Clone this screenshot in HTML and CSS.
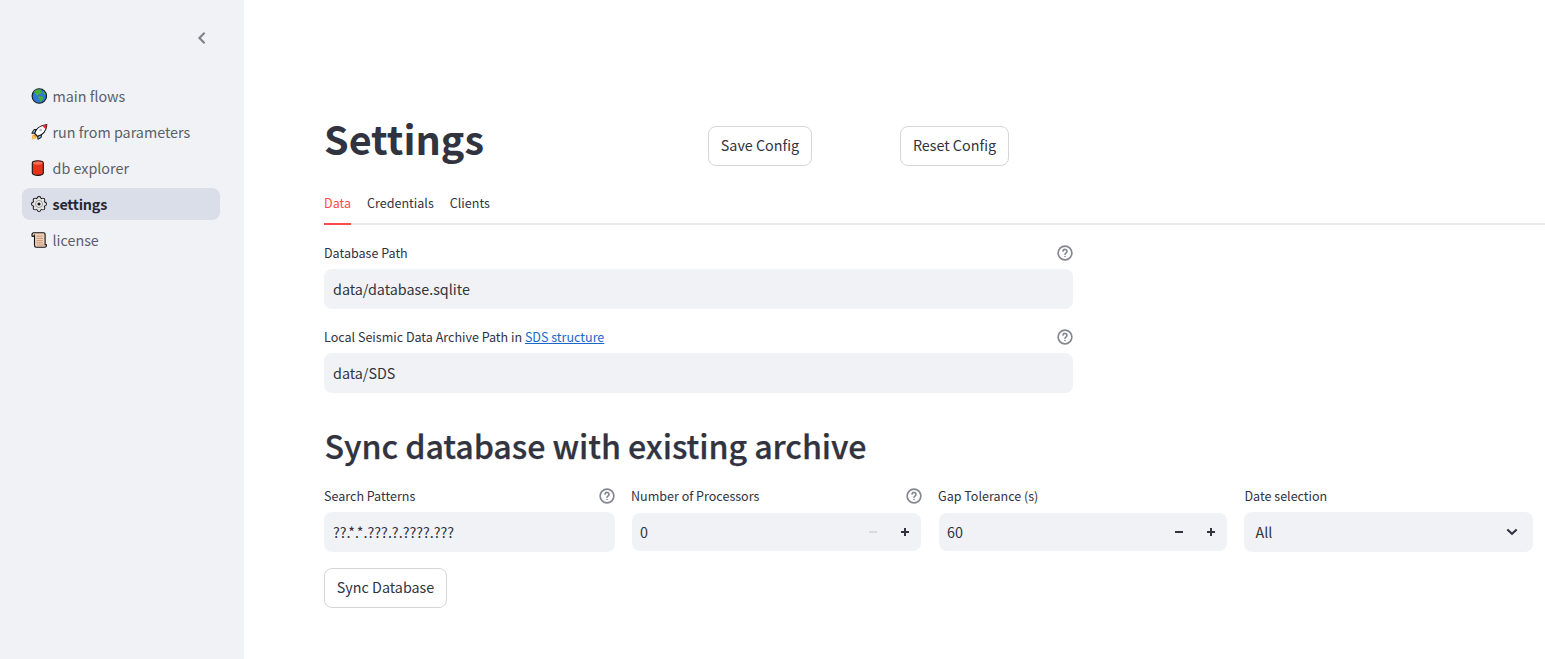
FILE: index.html
```
<!DOCTYPE html>
<html lang="en">
<head>
<meta charset="utf-8">
<title>Settings</title>
<link rel="stylesheet" href="styles.css">
</head>
<body>
<svg class="defs" width="0" height="0">
  <symbol id="help" viewBox="0 0 24 24"><g fill="none" stroke="currentColor" stroke-width="2.5" stroke-linecap="round" stroke-linejoin="round"><circle cx="12" cy="12" r="10.3"/><path d="M9 9a3 3 0 0 1 5.9 1c0 2-2.9 2.4-2.9 4M12 17.2v.1"/></g></symbol>
  <symbol id="teeth" viewBox="0 0 16 16"><circle cx="8" cy="2.5" r="1.5"/><circle cx="11.9" cy="4.1" r="1.5"/><circle cx="13.5" cy="8" r="1.5"/><circle cx="11.9" cy="11.9" r="1.5"/><circle cx="8" cy="13.5" r="1.5"/><circle cx="4.1" cy="11.9" r="1.5"/><circle cx="2.5" cy="8" r="1.5"/><circle cx="4.1" cy="4.1" r="1.5"/></symbol>
</svg>
<div class="app">
  <aside class="sidebar">
    <button class="collapse" aria-label="Collapse"><svg width="10" height="14" viewBox="0 0 10 14"><path d="M7.6 1.7 2.4 7l5.2 5.3" fill="none" stroke="currentColor" stroke-width="2.1"/></svg></button>
    <nav class="nav">
      <a class="nav-item"><svg class="nav-icon" viewBox="0 0 16 16"><circle cx="8.3" cy="8" r="7.2" fill="#2f78d4" stroke="#15191e" stroke-width="1.1"/><path d="M3.2 3.2 5.6 1.4l4.8.1-.8 1.7 1.5 1-1.7 1.7-1.7.2-.7 1.5-2-.7-.6-2-1.1-.4zM8.3 8l3 .6 1.3 1.5-1.5 2.1-1.8 1.9-.6-2.8L7 9.5zM12.5 3l1.8 2.3.3 2-1.5-.9-.9-1.7z" fill="#45b035"/></svg><span>main flows</span></a>
      <a class="nav-item"><svg class="nav-icon rocket" viewBox="0 0 16 16"><path d="M4.3 10.2 1.6 11 .7 15.5l4.5-1.3.8-2.5z" fill="#f5942c"/><path d="M2.4 11.5.8 15.4l3.9-1.6" fill="#fbd060"/><path d="M5.5 5.4 2.8 5.8.8 9.3l3.1-.2zM10.4 10.6l-.2 2.9-3.3 1.8-.1-3z" fill="#7bc2ec" stroke="#111" stroke-width="1" stroke-linejoin="round"/><path d="M3.7 9.5C4.5 5.4 8 1.6 15.9.5c-.7 7-4.5 10.6-9.3 11.8z" fill="#fff" stroke="#111" stroke-width="1.1" stroke-linejoin="round"/><path d="M11.2 1.8 15.9.5l-1.2 4.8z" fill="#e9272c"/><circle cx="9.7" cy="6.1" r="1.4" fill="#b8bec5"/></svg><span>run from parameters</span></a>
      <a class="nav-item"><svg class="nav-icon" viewBox="0 0 16 16"><path d="M1.3 2.9C1.3.1 12.3.1 12.3 2.9v10.2c0 3-11 3-11 0z" fill="#e63218" stroke="#1d1110" stroke-width="1.1"/><ellipse cx="6.8" cy="3.1" rx="4.8" ry="1.6" fill="#ed7158"/></svg><span>db explorer</span></a>
      <a class="nav-item active"><svg class="nav-icon" viewBox="0 0 16 16"><use href="#teeth" fill="#111" stroke="#111" stroke-width="1.9"/><circle cx="8" cy="8" r="6.2" fill="#111"/><use href="#teeth" fill="#e4e4e4"/><circle cx="8" cy="8" r="5.6" fill="#e4e4e4"/><circle cx="8" cy="8" r="3.5" fill="#f0f0f0" stroke="#858585" stroke-width=".8"/><circle cx="8" cy="8" r="1.6" fill="#111"/></svg><span>settings</span></a>
      <a class="nav-item"><svg class="nav-icon" viewBox="0 0 16 16"><path d="M2.4.8h10.2c1.1 0 1.5.8 1.5 1.8v10.1h1.5c0 1.6-.6 2.5-1.8 2.5H5.2c-1.3 0-1.7-.9-1.7-2V4.3H1C.8 2.2 1.2.9 2.4.8z" fill="#f0cfb8" stroke="#111" stroke-width="1.1" stroke-linejoin="round"/><path d="M5.5 4.1h6.2M5.5 6.4h6.5M5.5 8.6h6.2M5.5 10.8h6.5M6.2 13h7" stroke="#bd8c70" stroke-width=".8"/><path d="M1.1 4.2h2.4V2.4" fill="none" stroke="#111" stroke-width=".8"/></svg><span>license</span></a>
    </nav>
  </aside>
  <main class="main">
    <header class="head">
      <h1>Settings</h1>
      <div class="head-cell"><button class="btn save">Save Config</button></div>
      <div class="head-cell"><button class="btn reset">Reset Config</button></div>
    </header>
    <div class="tabs">
      <span class="tab selected">Data</span><span class="tab">Credentials</span><span class="tab">Clients</span>
    </div>
    <section class="paths">
      <div class="field">
        <div class="label"><span>Database Path</span><svg class="help"><use href="#help"/></svg></div>
        <div class="input"><span>data/database.sqlite</span></div>
      </div>
      <div class="field">
        <div class="label"><span>Local Seismic Data Archive Path in <a class="link">SDS structure</a></span><svg class="help"><use href="#help"/></svg></div>
        <div class="input"><span>data/SDS</span></div>
      </div>
    </section>
    <h2>Sync database with existing archive</h2>
    <section class="grid">
      <div class="field">
        <div class="label"><span>Search Patterns</span><svg class="help"><use href="#help"/></svg></div>
        <div class="input"><span>??.*.*.???.?.????.???</span></div>
      </div>
      <div class="field">
        <div class="label"><span>Number of Processors</span><svg class="help"><use href="#help"/></svg></div>
        <div class="input number"><span>0</span><svg class="step off" viewBox="0 0 8 8"><path d="M0 4h8"/></svg><svg class="step" viewBox="0 0 8 8"><path d="M0 4h8M4 0v8"/></svg></div>
      </div>
      <div class="field">
        <div class="label"><span>Gap Tolerance (s)</span></div>
        <div class="input number"><span>60</span><svg class="step" viewBox="0 0 8 8"><path d="M0 4h8"/></svg><svg class="step" viewBox="0 0 8 8"><path d="M0 4h8M4 0v8"/></svg></div>
      </div>
      <div class="field">
        <div class="label date"><span>Date selection</span></div>
        <div class="input select"><span>All</span><svg class="chev" viewBox="0 0 12 8"><path d="m1.3 1.5 4.7 4.3 4.7-4.3"/></svg></div>
      </div>
    </section>
    <button class="btn sync">Sync Database</button>
  </main>
</div>
</body>
</html>
```

FILE: styles.css
```
* { box-sizing: border-box; }
body {
  margin: 0;
  background: #fff;
  color: #31333f;
  font-family: "Noto Sans CJK JP", "Noto Sans CJK SC", sans-serif;
  font-size: 14.33px;
  line-height: 24px;
  overflow: hidden;
}
.defs { display: block; }
.app { display: flex; height: 659px; }
.sidebar { width: 244px; flex: none; background: #f0f2f6; padding: 26px 24px 0 22px; }
.collapse {
  display: flex; width: 24px; height: 24px; margin-left: auto; margin-right: 6px;
  align-items: center; justify-content: center;
  border: 0; padding: 0; background: none; color: #7f818b;
}
.nav { display: flex; flex-direction: column; gap: 4px; margin-top: 30px; }
.nav-item {
  display: flex; align-items: center; gap: 5.5px; height: 32px; padding: 0 9px;
  border-radius: 8px; color: #5b5e69; white-space: nowrap;
}
.nav-item.active { background: #dadee9; color: #262833; font-weight: 600; letter-spacing: -.2px; }
.nav-icon { width: 16px; height: 16px; flex: none; }
.rocket { overflow: visible; }
.main { flex: 1; min-width: 0; padding: 113px 0 0 80px; }
h1, h2 { margin: 0; font-weight: 700; white-space: nowrap; }
.head { display: grid; grid-template-columns: 368px 176px 1fr; column-gap: 16px; height: 77px; }
h1 { font-size: 39.5px; line-height: 50px; }
.head-cell { padding-top: 13px; }
.btn {
  display: block; height: 40px; padding: 0 0 2px; border: 1px solid #d6d6d9; border-radius: 8px;
  background: #fff; color: #31333f; font: inherit; white-space: nowrap;
}
.save { width: 104px; }
.reset { width: 109px; }
.sync { width: 123px; margin-top: 16px; }
.tabs {
  display: flex; gap: 16px; height: 35px; font-size: 12.55px; line-height: 26px;
  box-shadow: inset 0 -2px #e9eaeb;
}
.tab { height: 35px; white-space: nowrap; }
.selected { color: #ff4b4b; box-shadow: inset 0 -2px #ff4b4b; }
.paths { display: flex; flex-direction: column; gap: 16px; width: 749px; padding-top: 16px; }
.label {
  display: flex; align-items: center; justify-content: space-between;
  height: 24px; font-size: 12.54px; white-space: nowrap;
}
.date { padding-left: .5px; }
.help { width: 16px; height: 16px; color: #85868f; }
.label + .input { margin-top: 4px; }
.input {
  display: flex; align-items: center; height: 40px; padding: 0 9px;
  border-radius: 8px; background: #f0f2f6;
}
.link { color: #1c68c9; text-decoration: underline; text-underline-offset: 1px; }
h2 { margin-top: 31px; font-size: 32.2px; line-height: 43px; font-weight: 500; letter-spacing: -.07px; text-indent: .5px; -webkit-text-stroke: .25px #31333f; }
.grid { display: grid; grid-template-columns: 291px 291px 290px 289px; gap: 16px; padding-top: 17px; }
.number { border: 1px solid transparent; background-clip: padding-box; padding: 0 12px 0 8px; gap: 24px; border-radius: 9px; }
.number span, .select span { flex: 1; }
.step { width: 8px; height: 8px; fill: none; stroke: #31333f; stroke-width: 2; }
.off { stroke: #d9dbe3; }
.select { padding: 0 15px 0 11.5px; }
.chev { width: 12px; height: 8px; fill: none; stroke: #31333f; stroke-width: 2.1; }
```
